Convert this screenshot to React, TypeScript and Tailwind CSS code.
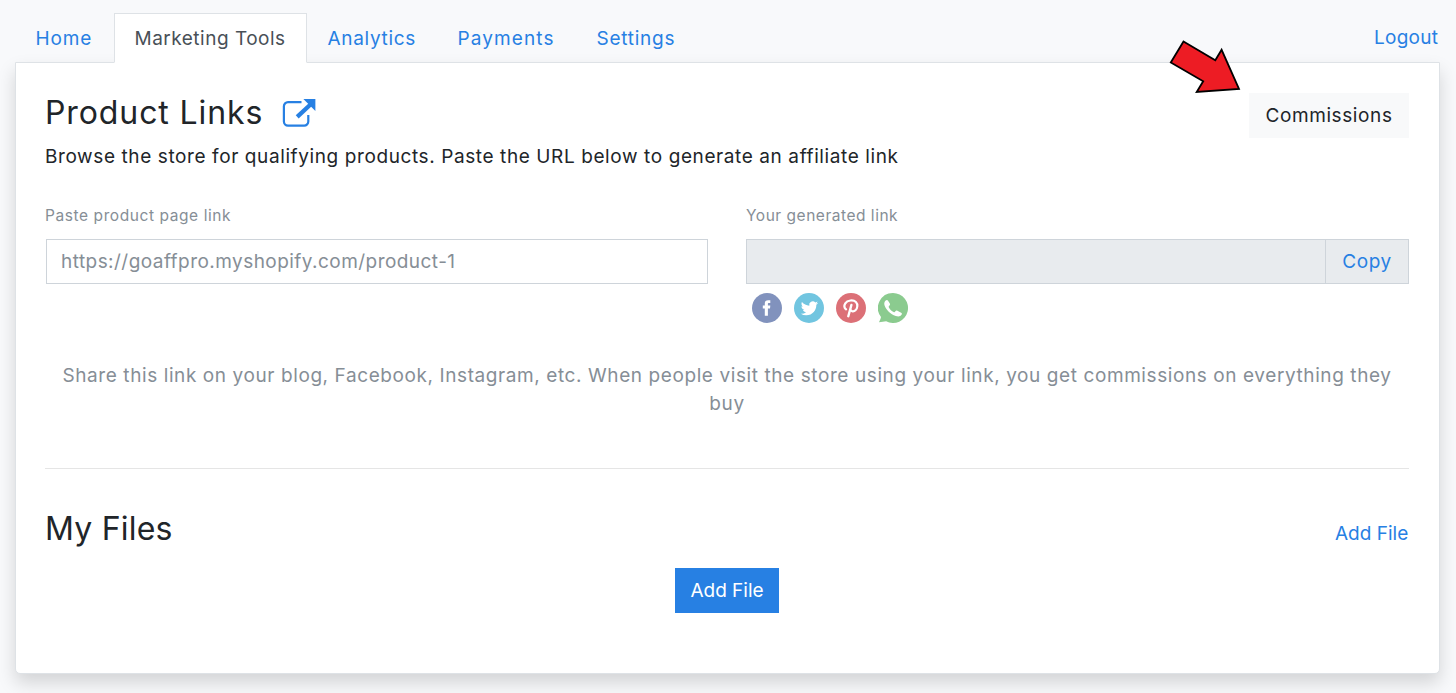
import React from "react";

const tabs = [
  { label: "Home", box: "w-[99px] border-transparent text-[#2780e3]", text: "tracking-[0.9px]" },
  { label: "Marketing Tools", box: "w-[193px] border-[#dee2e6] border-b-white bg-white text-[#495057]", text: "tracking-[0.5px]" },
  { label: "Analytics", box: "w-[130px] border-transparent text-[#2780e3]", text: "tracking-[0.68px]" },
  { label: "Payments", box: "w-[139px] border-transparent text-[#2780e3]", text: "tracking-[1.1px]" },
  { label: "Settings", box: "w-[120px] border-transparent text-[#2780e3]", text: "tracking-[0.75px]" },
];

function ExternalLinkIcon() {
  return (
    <svg className="h-[30px] w-[34px]" viewBox="0 0 34 30" fill="none">
      <path d="M19.5 4.2H6a4.1 4.1 0 0 0-4.1 4.1v15.2A4.1 4.1 0 0 0 6 27.6h16.2a4.1 4.1 0 0 0 4.1-4.1V17" stroke="#2780e3" strokeWidth="2.2" />
      <path d="M15.2 18.8 28.5 6.5" stroke="#2780e3" strokeWidth="4.3" />
      <path d="M21.4 1H33.4V13Z" fill="#2780e3" />
    </svg>
  );
}

function FacebookIcon() {
  return (
    <svg className="size-[30px]" viewBox="0 0 30 30">
      <circle cx="15" cy="15" r="15" fill="#8192bd" />
      <path fill="#fff" d="M12.800 22.700V15.400h-2V12.400h2v-1.900c0-2.200 1.200-3.300 3.300-3.300h2.200v2.700h-1.400c-.8 0-1 .4-1 1v1.500h2.400l-.3 3h-2.100v7.300Z" />
    </svg>
  );
}

function TwitterIcon() {
  return (
    <svg className="size-[30px]" viewBox="0 0 30 30">
      <circle cx="15" cy="15" r="15" fill="#71c5e0" />
      <path
        fill="#fff"
        transform="translate(6.800 6.700) scale(.72)"
        d="M23.954 4.569a10 10 0 0 1-2.825.775 4.958 4.958 0 0 0 2.163-2.723c-.951.555-2.005.959-3.127 1.184a4.920 4.920 0 0 0-8.384 4.482C7.691 8.094 4.066 6.130 1.640 3.161a4.822 4.822 0 0 0-.666 2.475c0 1.710.870 3.213 2.188 4.096a4.904 4.904 0 0 1-2.228-.616v.061a4.923 4.923 0 0 0 3.946 4.827 4.996 4.996 0 0 1-2.212.085 4.937 4.937 0 0 0 4.604 3.417 9.868 9.868 0 0 1-6.102 2.105c-.390 0-.779-.023-1.170-.067a13.995 13.995 0 0 0 7.557 2.209c9.054 0 13.999-7.496 13.999-13.986 0-.209 0-.420-.015-.630a9.936 9.936 0 0 0 2.460-2.548z"
      />
    </svg>
  );
}

function PinterestIcon() {
  return (
    <svg className="size-[30px]" viewBox="0 0 30 30" fill="none" stroke="#fff" strokeLinecap="round">
      <circle cx="15" cy="15" r="15" fill="#dc7077" stroke="none" />
      <path d="M10.100 16.400C8.300 14.900 8 12.400 9.300 10.300c2-3.200 8-3.800 10.600-1.300 2.200 2.200 1.700 6.300-.4 8.300-1.700 1.600-4.300 1.300-5-.5" strokeWidth="2.200" />
      <path d="M15.400 12 12.300 23.200" strokeWidth="2.400" />
    </svg>
  );
}

function WhatsappIcon() {
  return (
    <svg className="size-[30px]" viewBox="0 0 30 30">
      <path fill="#8bcb8f" d="M15 0a15 15 0 1 1-6.900 28.300C6 28.600 3.600 29 1 29.200c1-1.700 1.700-3.600 2-5.100A15 15 0 0 1 15 0Z" />
      <path fill="#fff" d="M7.700 7.600c.8-.8 1.600-.8 2.200 0l1.900 3c.5.800.3 1.500-.3 2-.8.700-1 1.200-.6 1.900 1.200 2 2.700 3.500 4.700 4.500.7.400 1.200.1 1.800-.7.500-.7 1.200-.9 2-.5l3.700 1.900c.8.400 1 1.100.6 1.900-1.100 2-3.400 2.500-5.900 1.500C12.300 20.900 8.300 17 6.600 12.400c-.7-1.900-.3-3.500 1.100-4.800Z" />
    </svg>
  );
}

export default function App() {
  return (
    <div className="relative h-[693px] overflow-hidden bg-[#f8f9fb] pt-[13px] pr-4 pl-[15px] font-['Inter',sans-serif] text-[19px] leading-[28px] font-normal whitespace-nowrap text-[#212529]">
      <header className="relative z-10 -mb-px flex h-[50px] justify-between">
        <nav className="flex">
          {tabs.map((t) => (
            <a key={t.label} className={`flex h-[50px] items-center border pt-0.5 pl-[19.5px] ${t.box}`}>
              <span className={t.text}>{t.label}</span>
            </a>
          ))}
        </nav>
        <a className="w-[66px] pt-[11px] tracking-[0.25px] text-[#2780e3]">Logout</a>
      </header>

      <main className="h-[612px] rounded-b-[5px] border border-[#dee2e6] bg-white pt-[30px] pr-[30px] pl-[29px] shadow-[0_9px_18px_rgba(0,0,0,0.15)]">
        <section>
          <div className="flex h-[45px] items-start justify-between">
            <h1 className="flex text-[32px] leading-[40px]">
              <span className="w-[237px] tracking-[0.9px]">Product Links</span>
              <span className="pt-[5px]">
                <ExternalLinkIcon />
              </span>
            </h1>
            <button className="h-[45px] w-[160px] bg-[#f8f9fa] tracking-[0.6px]">Commissions</button>
          </div>
          <p className="mt-[5px] tracking-[0.6px]">
            Browse the store for qualifying products. Paste the URL below to generate an affiliate link
          </p>

          <div className="mt-[33px] grid grid-cols-[662px_1fr] gap-[38px] pl-px text-[#868e96]">
            <div>
              <label className="-ml-px block text-[15.5px] leading-[24px] tracking-[0.58px]">Paste product page link</label>
              <div className="mt-[11px] flex h-[45px] items-center border border-[#ced4da] pl-[14px] tracking-[0.45px]">
                https://goaffpro.myshopify.com/product-1
              </div>
            </div>
            <div>
              <label className="block text-[15.5px] leading-[24px] tracking-[0.52px]">Your generated link</label>
              <div className="mt-[11px] flex h-[45px] border border-[#ced4da] bg-[#e8ebee]">
                <div className="flex-1" />
                <button className="w-[83px] border-l border-[#ced4da] tracking-[0.6px] text-[#2780e3]">Copy</button>
              </div>
              <div className="mt-[9px] flex gap-3 pl-[6px]">
                <FacebookIcon />
                <TwitterIcon />
                <PinterestIcon />
                <WhatsappIcon />
              </div>
            </div>
          </div>

          <p className="mt-[39px] text-center tracking-[0.59px] text-[#868e96]">
            Share this link on your blog, Facebook, Instagram, etc. When people visit the store using your link, you get commissions on everything they
            <br />
            buy
          </p>
        </section>

        <hr className="mt-[50px] border-[#e5e5e5]" />

        <section className="pt-[40px]">
          <div className="flex items-center justify-between">
            <h2 className="text-[32px] leading-[40px] tracking-[0.2px]">My Files</h2>
            <a className="w-[74px] pt-[9px] text-[#2780e3]">Add File</a>
          </div>
          <div className="mt-[19px] flex justify-center">
            <button className="h-[45px] w-[104px] bg-[#2780e3] text-white">Add File</button>
          </div>
        </section>
      </main>

      <svg className="absolute top-[38px] left-[1168px] h-[58px] w-[76px]" viewBox="1168 38 76 58">
        <path
          d="M1183.500 41.500 1215.300 60.300 1221.600 49.800 1239 89 1196.700 92 1203.200 81.200 1170.800 62.500Z"
          fill="#ed1c24"
          stroke="#000"
          strokeWidth="1.800"
        />
      </svg>
    </div>
  );
}
